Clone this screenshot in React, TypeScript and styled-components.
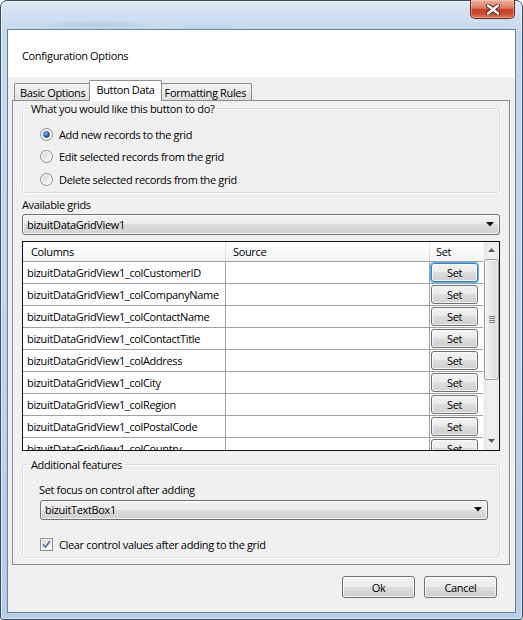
import styled, { createGlobalStyle } from "styled-components";

const GlobalStyle = createGlobalStyle`
  html, body {
    margin: 0;
    padding: 0;
    background: #fff;
  }
  body {
    font-family: "Open Sans", "Noto Sans", sans-serif;
    font-size: 11px;
    letter-spacing: -0.35px;
    color: #000;
  }
  * {
    box-sizing: border-box;
  }
`;

const Window = styled.div`
  width: 523px;
  height: 620px;
  display: flex;
  flex-direction: column;
  border: 1px solid #3d4c5f;
  border-radius: 7px 7px 3px 3px;
  background: linear-gradient(180deg, #dce8f5 0%, #c6d9ee 28px, #bdd3eb 55%, #b6cde8 100%);
  box-shadow: inset 0 0 0 1px rgba(255, 255, 255, 0.55);
  padding: 0 6px 6px 6px;
`;

const TitleBar = styled.div`
  height: 28px;
  display: flex;
  justify-content: flex-end;
  align-items: flex-start;
  background:
    radial-gradient(ellipse 70px 5px at 90px 24px, rgba(110, 130, 150, 0.18), transparent),
    radial-gradient(ellipse 40px 4px at 200px 25px, rgba(110, 130, 150, 0.1), transparent);
`;

const CloseButton = styled.div`
  width: 45px;
  height: 19px;
  margin: -1px 1px 0 0;
  display: flex;
  align-items: center;
  justify-content: center;
  border: 1px solid #6e2418;
  border-top: none;
  border-radius: 0 0 5px 5px;
  background: linear-gradient(
    180deg,
    #eab2a2 0%,
    #dc7b64 45%,
    #c7432b 52%,
    #c84a31 75%,
    #dd7a5c 100%
  );
  box-shadow: inset 0 0 0 1px rgba(255, 210, 190, 0.45);
`;

const Client = styled.div`
  flex: 1;
  display: flex;
  flex-direction: column;
  background: #f0f0f0;
  border: 1px solid #6b7f99;
`;

const Header = styled.div`
  height: 47px;
  display: flex;
  align-items: center;
  padding: 3px 0 0 14px;
  background: #fff;
`;

const TabArea = styled.div`
  padding: 0 5px 0 4px;
`;

const TabStrip = styled.div`
  height: 23px;
  display: flex;
  align-items: flex-end;
  position: relative;
  z-index: 1;
`;

const Tab = styled.div<{ $active?: boolean }>`
  height: ${(p) => (p.$active ? "21px" : "17px")};
  margin: ${(p) => (p.$active ? "0 -2px -1px -2px" : "0 0 0 -1px")};
  padding: ${(p) => (p.$active ? "1px 6px 0" : "0 5px")};
  display: flex;
  align-items: ${(p) => (p.$active ? "flex-start" : "center")};
  border: 1px solid #898c95;
  border-bottom: none;
  border-radius: 2px 2px 0 0;
  background: ${(p) =>
    p.$active ? "#fff" : "linear-gradient(180deg, #f2f2f2 0%, #ebebeb 50%, #dcdcdc 100%)"};
  position: relative;
  z-index: ${(p) => (p.$active ? 2 : 1)};
  white-space: nowrap;
  &:first-child {
    margin-left: 2px;
  }
`;

const Panel = styled.div`
  height: 465px;
  display: flex;
  flex-direction: column;
  border: 1px solid #898c95;
  background: #f0f0f0;
  padding: 0 9px 0 9px;
`;

const Group = styled.fieldset<{ $pad: string; $top?: number }>`
  margin: ${(p) => p.$top ?? 0}px 0 0 0;
  padding: ${(p) => p.$pad};
  border: 1px solid #d5dfe5;
  border-radius: 3px;
  box-shadow: inset 1px 1px 0 #fff, 1px 1px 0 #fff;
  min-width: 0;
`;

const Legend = styled.legend<{ $shift: number }>`
  margin-left: ${(p) => p.$shift}px;
  padding: 0 2px;
  line-height: 15px;
`;

const OptionRow = styled.label`
  height: 22.5px;
  display: flex;
  align-items: center;
  gap: 6px;
`;

const FieldLabel = styled.div<{ $top: number }>`
  margin-top: ${(p) => p.$top}px;
  line-height: 16px;
`;

const Combo = styled.div<{ $h: number; $top: number; $indent?: number }>`
  height: ${(p) => p.$h}px;
  margin: ${(p) => p.$top}px 0 0 ${(p) => p.$indent ?? 0}px;
  display: flex;
  align-items: center;
  justify-content: space-between;
  padding: 0 5px 0 4px;
  border: 1px solid #707070;
  border-radius: 3px;
  background: linear-gradient(180deg, #f2f2f2 0%, #ebebeb 49%, #dddddd 50%, #cfcfcf 100%);
  box-shadow: inset 0 0 0 1px rgba(255, 255, 255, 0.7);
`;

const GridFrame = styled.div`
  height: 210px;
  margin-top: 6px;
  display: flex;
  border: 1px solid #111;
  background: #fff;
  overflow: hidden;
`;

const GridBody = styled.div`
  flex: 1;
  overflow: hidden;
`;

const HeaderRow = styled.div`
  display: grid;
  grid-template-columns: 203px 204px 50px;
  height: 20px;
  border-bottom: 1px solid #a0a0a0;
  background: linear-gradient(180deg, #ffffff 0%, #f7f8fa 60%, #f1f2f4 100%);
`;

const HeaderCell = styled.div<{ $pad: number }>`
  display: flex;
  align-items: center;
  padding-left: ${(p) => p.$pad}px;
  border-right: 1px solid #e3e4e6;
  &:last-child {
    border-right: none;
  }
`;

const Row = styled.div`
  display: grid;
  grid-template-columns: 203px 204px 50px;
  height: 22px;
  border-bottom: 1px solid #a0a0a0;
`;

const Cell = styled.div`
  display: flex;
  align-items: center;
  padding-left: 4px;
  border-right: 1px solid #a0a0a0;
  white-space: nowrap;
  overflow: hidden;
`;

const ButtonCell = styled.div`
  padding: 1px 2px 1px 1px;
  display: flex;
`;

const SetButton = styled.div<{ $focused?: boolean }>`
  flex: 1;
  display: flex;
  align-items: center;
  justify-content: center;
  border: 1px solid ${(p) => (p.$focused ? "#3c7fb1" : "#707070")};
  border-radius: 3px;
  background: linear-gradient(180deg, #f2f2f2 0%, #ebebeb 49%, #dddddd 50%, #cfcfcf 100%);
  box-shadow: ${(p) =>
    p.$focused
      ? "0 0 0 1px #5eb1ef, inset 0 0 0 1px rgba(255,255,255,0.7)"
      : "inset 0 0 0 1px rgba(255,255,255,0.7)"};
`;

const ScrollBar = styled.div`
  width: 16px;
  display: flex;
  flex-direction: column;
  background: linear-gradient(90deg, #e6e6e6 0%, #f2f2f2 40%, #ececec 100%);
  border-left: 1px solid #f7f7f7;
`;

const ScrollArrow = styled.div`
  height: 17px;
  display: flex;
  align-items: center;
  justify-content: center;
`;

const Thumb = styled.div`
  height: 121px;
  display: flex;
  align-items: center;
  justify-content: center;
  border: 1px solid #979797;
  border-radius: 3px;
  background: linear-gradient(90deg, #f3f3f3 0%, #e8e8e8 50%, #d6d6d6 100%);
  box-shadow: inset 0 0 0 1px rgba(255, 255, 255, 0.7);
`;

const ScrollSpacer = styled.div`
  flex: 1;
`;

const CheckRow = styled.label`
  height: 16px;
  margin: 17px 0 0 1px;
  display: flex;
  align-items: center;
  gap: 6px;
`;

const Footer = styled.div`
  display: flex;
  justify-content: flex-end;
  gap: 9px;
  padding: 11px 18px 0 0;
`;

const DialogButton = styled.div`
  width: 73px;
  height: 22px;
  display: flex;
  align-items: center;
  justify-content: center;
  border: 1px solid #707070;
  border-radius: 3px;
  background: linear-gradient(180deg, #f2f2f2 0%, #ebebeb 49%, #dddddd 50%, #cfcfcf 100%);
  box-shadow: inset 0 0 0 1px rgba(255, 255, 255, 0.7);
`;

const CloseGlyph = () => (
  <svg width="14" height="11" viewBox="0 0 14 11">
    <path d="M2 1.5 L12 9.5 M12 1.5 L2 9.5" stroke="#5a2218" strokeWidth="4.4" strokeLinecap="round" />
    <path d="M2 1.5 L12 9.5 M12 1.5 L2 9.5" stroke="#ffffff" strokeWidth="2.4" strokeLinecap="round" />
  </svg>
);

const RadioGlyph = ({ checked }: { checked?: boolean }) => (
  <svg width="13" height="13" viewBox="0 0 13 13">
    <defs>
      <linearGradient id="radioBg" x1="0" y1="0" x2="1" y2="1">
        <stop offset="0" stopColor="#d4d4d4" />
        <stop offset="1" stopColor="#fbfbfb" />
      </linearGradient>
      <radialGradient id="radioDot" cx="0.4" cy="0.35" r="0.7">
        <stop offset="0" stopColor="#9adcff" />
        <stop offset="0.45" stopColor="#2c7fc6" />
        <stop offset="1" stopColor="#0d3d75" />
      </radialGradient>
    </defs>
    <circle cx="6.5" cy="6.5" r="6" fill="#f5f5f5" stroke="#8e8f8f" />
    <circle cx="6.5" cy="6.5" r="4.3" fill="url(#radioBg)" />
    {checked && <circle cx="6.5" cy="6.5" r="3" fill="url(#radioDot)" stroke="#1c4e85" strokeWidth="0.6" />}
  </svg>
);

const CheckGlyph = () => (
  <svg width="13" height="13" viewBox="0 0 13 13">
    <defs>
      <linearGradient id="checkBg" x1="0" y1="0" x2="1" y2="1">
        <stop offset="0" stopColor="#d8d8d8" />
        <stop offset="1" stopColor="#fafafa" />
      </linearGradient>
    </defs>
    <rect x="0.5" y="0.5" width="12" height="12" fill="#f5f5f5" stroke="#8e8f8f" />
    <rect x="2" y="2" width="9" height="9" fill="url(#checkBg)" />
    <path d="M3 6.4 L5.4 9 L10 3" stroke="#5a6f9c" strokeWidth="1.7" fill="none" />
  </svg>
);

const DropArrow = () => (
  <svg width="8" height="5" viewBox="0 0 8 5">
    <path d="M0 0 H8 L4 4.5 Z" fill="#111" />
  </svg>
);

const ScrollGlyph = ({ down }: { down?: boolean }) => (
  <svg width="7" height="4" viewBox="0 0 7 4">
    <path d={down ? "M0 0 H7 L3.5 4 Z" : "M0 4 H7 L3.5 0 Z"} fill="#5a5a5a" />
  </svg>
);

const Grip = () => (
  <svg width="6" height="7" viewBox="0 0 6 7">
    <path d="M0 0.5 H6 M0 2.5 H6 M0 4.5 H6 M0 6.5 H6" stroke="#7d7d7d" strokeWidth="1" />
  </svg>
);

const gridColumns = [
  "bizuitDataGridView1_colCustomerID",
  "bizuitDataGridView1_colCompanyName",
  "bizuitDataGridView1_colContactName",
  "bizuitDataGridView1_colContactTitle",
  "bizuitDataGridView1_colAddress",
  "bizuitDataGridView1_colCity",
  "bizuitDataGridView1_colRegion",
  "bizuitDataGridView1_colPostalCode",
  "bizuitDataGridView1_colCountry",
];

const actions = [
  { label: "Add new records to the grid", checked: true },
  { label: "Edit selected records from the grid" },
  { label: "Delete selected records from the grid" },
];

export default function App() {
  return (
    <>
      <GlobalStyle />
      <Window>
        <TitleBar>
          <CloseButton>
            <CloseGlyph />
          </CloseButton>
        </TitleBar>
        <Client>
          <Header>Configuration Options</Header>
          <TabArea>
            <TabStrip>
              <Tab>Basic Options</Tab>
              <Tab $active>Button Data</Tab>
              <Tab>Formatting Rules</Tab>
            </TabStrip>
            <Panel>
              <Group $pad="7px 0 1px 17px">
                <Legend $shift={-11}>What you would like this button to do?</Legend>
                {actions.map((a) => (
                  <OptionRow key={a.label}>
                    <RadioGlyph checked={a.checked} />
                    {a.label}
                  </OptionRow>
                ))}
              </Group>

              <FieldLabel $top={4}>Available grids</FieldLabel>
              <Combo $h={21} $top={1}>
                <span>bizuitDataGridView1</span>
                <DropArrow />
              </Combo>

              <GridFrame>
                <GridBody>
                  <HeaderRow>
                    <HeaderCell $pad={8}>Columns</HeaderCell>
                    <HeaderCell $pad={7}>Source</HeaderCell>
                    <HeaderCell $pad={6}>Set</HeaderCell>
                  </HeaderRow>
                  {gridColumns.map((name, i) => (
                    <Row key={name}>
                      <Cell>{name}</Cell>
                      <Cell />
                      <ButtonCell>
                        <SetButton $focused={i === 0}>Set</SetButton>
                      </ButtonCell>
                    </Row>
                  ))}
                </GridBody>
                <ScrollBar>
                  <ScrollArrow>
                    <ScrollGlyph />
                  </ScrollArrow>
                  <Thumb>
                    <Grip />
                  </Thumb>
                  <ScrollSpacer />
                  <ScrollArrow>
                    <ScrollGlyph down />
                  </ScrollArrow>
                </ScrollBar>
              </GridFrame>

              <Group $pad="10px 11px 4px 16px" $top={6}>
                <Legend $shift={-10}>Additional features</Legend>
                <FieldLabel $top={0}>Set focus on control after adding</FieldLabel>
                <Combo $h={20} $top={2} $indent={1}>
                  <span>bizuitTextBox1</span>
                  <DropArrow />
                </Combo>
                <CheckRow>
                  <CheckGlyph />
                  Clear control values after adding to the grid
                </CheckRow>
              </Group>
            </Panel>
          </TabArea>
          <Footer>
            <DialogButton>Ok</DialogButton>
            <DialogButton>Cancel</DialogButton>
          </Footer>
        </Client>
      </Window>
    </>
  );
}
